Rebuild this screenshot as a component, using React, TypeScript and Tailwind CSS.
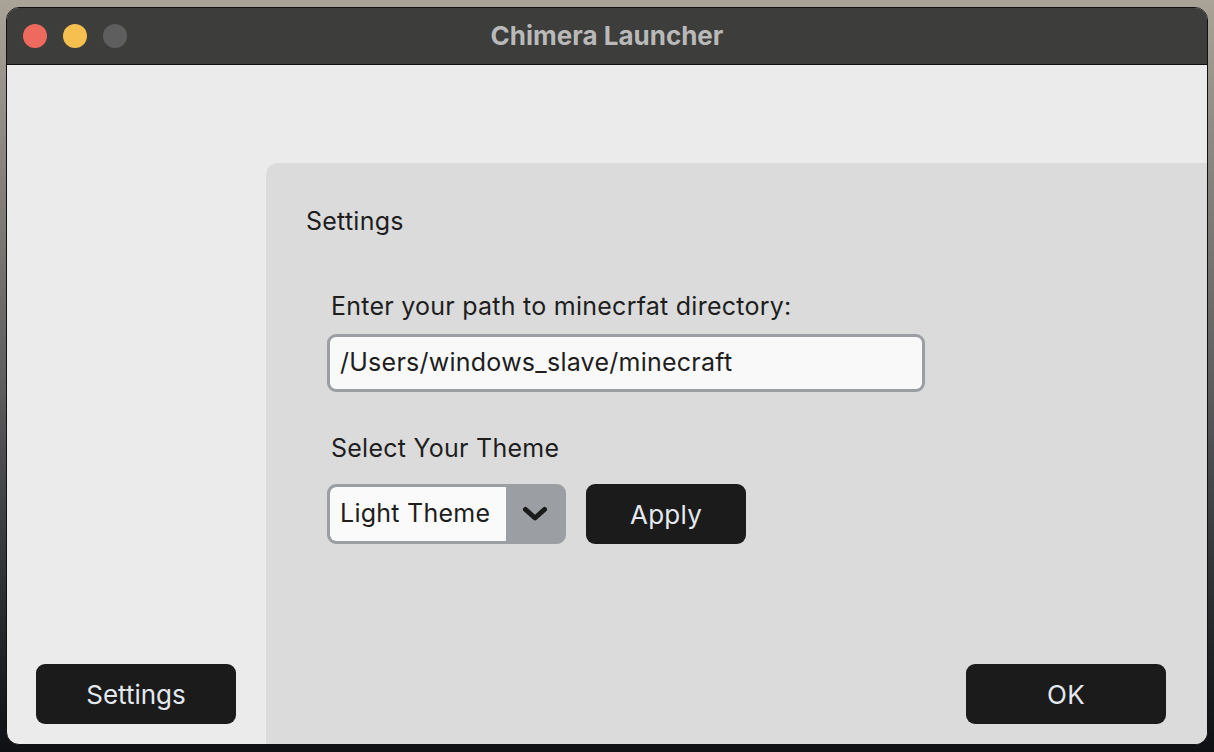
const font = "font-['Inter','Noto_Sans',sans-serif]";

const darkButton =
  "flex items-center justify-center rounded-[9px] bg-[#1b1b1b] text-[#e4e8ef] text-[26px]";

function TrafficLights() {
  return (
    <div className="flex items-center gap-[16px] pl-[16px]">
      <span className="h-[24px] w-[24px] rounded-full bg-[#ee6a5f]" />
      <span className="h-[24px] w-[24px] rounded-full bg-[#f5c04f]" />
      <span className="h-[24px] w-[24px] rounded-full bg-[#5e5e5e]" />
    </div>
  );
}

function Chevron() {
  return (
    <svg width="26" height="16" viewBox="0 0 26 16" fill="none">
      <path
        d="M3.5 3.5 L13 12 L22.5 3.5"
        stroke="#1a1a1a"
        strokeWidth="5"
        strokeLinecap="round"
        strokeLinejoin="round"
      />
    </svg>
  );
}

export default function App() {
  return (
    <div
      className={`${font} flex h-[752px] w-[1214px] bg-gradient-to-b from-[#aaa397] via-[#5f5f60] to-[#0e1013] px-[6px] pb-[7px] pt-[7px]`}
    >
      <div className="flex flex-1 flex-col overflow-hidden rounded-[13px] border border-[#111] bg-[#ebebeb]">
        {/* title bar */}
        <div className="relative flex h-[57px] shrink-0 items-center border-b border-[#111] bg-[#3d3d3b]">
          <TrafficLights />
          <div className="absolute inset-0 flex items-center justify-center pb-[2px] text-[26px] font-bold text-[#b9b9b9]">
            Chimera Launcher
          </div>
        </div>

        <div className="flex flex-1">
          {/* sidebar */}
          <div className="flex w-[259px] flex-col justify-end pb-[20px] pl-[29px]">
            <button className={`${darkButton} h-[60px] w-[200px]`}>Settings</button>
          </div>

          {/* main */}
          <div className="flex flex-1 flex-col pt-[98px]">
            <div className="flex flex-1 flex-col rounded-tl-[12px] bg-[#dbdbdb] pl-[40px] pt-[43px] text-[25px] tracking-[0.01em] text-[#1e1e1e]">
              <h1 className="leading-[30px]">Settings</h1>

              <div className="ml-[21px] mt-[55px] flex flex-col">
                <label className="pl-[4px] leading-[30px]">
                  Enter your path to minecrfat directory:
                </label>
                <div className="mt-[13px] flex h-[58px] w-[598px] items-center rounded-[9px] border-[3px] border-[#9b9fa4] bg-[#f9f9f9] pl-[10px]">
                  /Users/windows_slave/minecraft
                </div>

                <div className="mt-[41px] pl-[4px] leading-[30px]">Select Your Theme</div>
                <div className="mt-[21px] flex items-center gap-[20px]">
                  <div className="flex h-[60px] w-[239px] overflow-hidden rounded-[9px] border-[3px] border-[#9b9fa4] bg-[#9b9fa4]">
                    <div className="flex flex-1 items-center rounded-l-[6px] bg-[#fafafa] pl-[10px]">
                      Light Theme
                    </div>
                    <div className="flex w-[57px] items-center justify-center">
                      <Chevron />
                    </div>
                  </div>
                  <button className={`${darkButton} h-[60px] w-[160px]`}>Apply</button>
                </div>
              </div>

              <div className="flex-1" />
              <div className="flex justify-end pb-[20px] pr-[41px]">
                <button className={`${darkButton} h-[60px] w-[200px]`}>OK</button>
              </div>
            </div>
          </div>
        </div>
      </div>
    </div>
  );
}
